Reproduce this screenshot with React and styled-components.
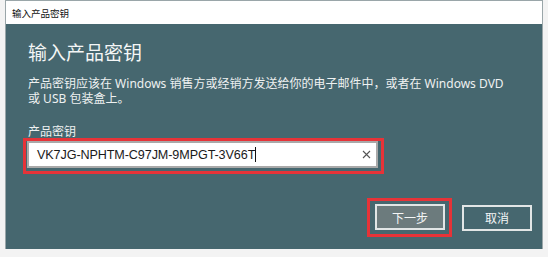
import React from "react";
import styled, { createGlobalStyle } from "styled-components";

const Global = createGlobalStyle`
  html, body { margin: 0; padding: 0; background: #f3f3f3; }
  body { font-family: "Noto Sans", "Noto Sans CJK SC", sans-serif; }
  * { box-sizing: border-box; }
`;

const Page = styled.div`
  width: 548px;
  height: 257px;
  background: #f3f3f3;
  padding-left: 5px;
`;

const Window = styled.div`
  width: 538px;
  height: 249px;
  border: 1px solid #9aa6a9;
  border-bottom: none;
  display: flex;
  flex-direction: column;
  background: #46676f;
`;

const TitleBar = styled.div`
  height: 23px;
  flex: none;
  background: #ffffff;
  display: flex;
  align-items: center;
  padding-left: 6px;
  font-family: "Noto Sans CJK SC", sans-serif;
  font-size: 9.5px;
  color: #111;
`;

const Content = styled.div`
  flex: 1;
  padding: 15px 10px 0 22px;
  display: flex;
  flex-direction: column;
  color: #f2f4f4;
`;

const Heading = styled.h1`
  margin: 0;
  font-family: "Noto Sans CJK SC", sans-serif;
  font-weight: 400;
  font-size: 19px;
  line-height: 26px;
  color: #f4f6f6;
`;

const Description = styled.p`
  margin: 12px 0 0;
  font-family: "Noto Sans", "Noto Sans CJK SC", sans-serif;
  font-size: 12px;
  line-height: 14.5px;
  color: #eef1f1;
`;

const FieldLabel = styled.div`
  margin-top: 17px;
  font-family: "Noto Sans CJK SC", sans-serif;
  font-size: 12px;
  line-height: 15px;
  color: #eef1f1;
`;

const Highlight = styled.div`
  align-self: flex-start;
  border: 3px solid #e63338;
  padding: ${(p) => p.$pad};
  margin-left: ${(p) => p.$ml || "0"};
`;

const InputBox = styled.div`
  width: 351px;
  height: 27px;
  background: #ffffff;
  border: 2px solid #a9a9a9;
  display: flex;
  align-items: center;
  padding: 0 5px 0 8px;
`;

const InputText = styled.div`
  flex: 1;
  font-family: "Liberation Sans", Arial, sans-serif;
  font-size: 12.6px;
  letter-spacing: -0.1px;
  color: #1a1a1a;
  display: flex;
  align-items: center;
`;

const Caret = styled.span`
  display: inline-block;
  width: 1px;
  height: 15px;
  background: #111;
  margin-left: 0px;
`;

const ClearIcon = styled.svg`
  width: 9px;
  height: 9px;
  flex: none;
`;

const ButtonRow = styled.div`
  margin-top: 24px;
  display: flex;
  justify-content: flex-end;
  align-items: center;
  gap: 10px;
`;

const Button = styled.button`
  width: 70px;
  height: 26px;
  border: 2px solid #e2e6e6;
  background: ${(p) => (p.$primary ? "#6c7b7d" : "#46676f")};
  color: #f4f6f6;
  font-family: "Noto Sans CJK SC", sans-serif;
  font-size: 12px;
  padding: 0;
  display: flex;
  align-items: center;
  justify-content: center;
`;

export default function App() {
  return (
    <>
      <Global />
      <Page>
        <Window>
          <TitleBar>输入产品密钥</TitleBar>
          <Content>
            <Heading>输入产品密钥</Heading>
            <Description>
              产品密钥应该在 Windows 销售方或经销方发送给你的电子邮件中，或者在 Windows DVD
              <br />或 USB 包装盒上。
            </Description>
            <FieldLabel>产品密钥</FieldLabel>
            <Highlight $pad="0 3px 3px 1px" $ml="-5px">
              <InputBox>
                <InputText>
                  VK7JG-NPHTM-C97JM-9MPGT-3V66T
                  <Caret />
                </InputText>
                <ClearIcon viewBox="0 0 9 9">
                  <path d="M1 1 L8 8 M8 1 L1 8" stroke="#555" strokeWidth="1.1" fill="none" />
                </ClearIcon>
              </InputBox>
            </Highlight>
            <ButtonRow>
              <Highlight $pad="3px 4px 4px 5px">
                <Button $primary>下一步</Button>
              </Highlight>
              <Button>取消</Button>
            </ButtonRow>
          </Content>
        </Window>
      </Page>
    </>
  );
}
